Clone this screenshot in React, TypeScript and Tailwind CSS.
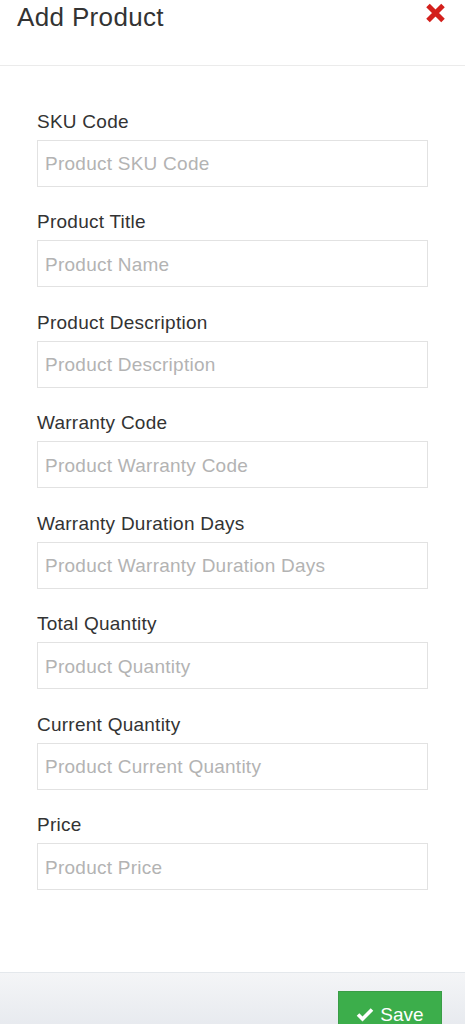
import React from "react";

const fields = [
  ["SKU Code", "Product SKU Code"],
  ["Product Title", "Product Name"],
  ["Product Description", "Product Description"],
  ["Warranty Code", "Product Warranty Code"],
  ["Warranty Duration Days", "Product Warranty Duration Days"],
  ["Total Quantity", "Product Quantity"],
  ["Current Quantity", "Product Current Quantity"],
  ["Price", "Product Price"],
];

export default function App() {
  return (
    <div className="w-[465px] h-[1024px] overflow-hidden bg-white flex flex-col" style={{ fontFamily: '"Liberation Sans", Arial, sans-serif' }}>
      <div className="h-[66px] border-b border-[#ebebeb] flex items-start justify-between pl-[17px] pr-[19px] shrink-0">
        <h1 className="text-[26px] leading-[30px] mt-[2px] tracking-[0.35px] text-[#333]">Add Product</h1>
        <svg width="21" height="20" viewBox="0 0 21 20" className="mt-[3px]">
          <path d="M3 2.5 L18 17.5 M18 2.5 L3 17.5" stroke="#d3201c" strokeWidth="5" strokeLinecap="butt" />
        </svg>
      </div>
      <div className="pt-[44.5px] pl-[37px] pr-[37px] pb-[82px] flex flex-col shrink-0">
        {fields.map(([label, ph], i) => (
          <div key={i} className={i < fields.length - 1 ? "mb-[24.5px]" : ""}>
            <label className="block text-[19px] leading-[22px] tracking-[0.25px] text-[#333] mb-[7px]">{label}</label>
            <input
              placeholder={ph}
              className="block w-full h-[47px] border border-[#e2e2e2] px-[7px] pt-[2px] text-[19px] tracking-[0.25px] text-[#333] placeholder:text-[#b3b3b3] outline-none"
              style={{ fontFamily: '"Liberation Sans", Arial, sans-serif' }}
            />
          </div>
        ))}
      </div>
      <div className="flex-1 border-t border-[#e4e8ec] bg-gradient-to-b from-[#f4f5f7] to-[#e6e9ee] flex justify-end items-start pt-[18px] pr-[23px]">
        <button className="w-[104px] h-[40px] bg-[#3cae4b] border border-[#3a9d47] text-white text-[19px] flex items-center justify-center gap-[6px] pb-[2px] mt-[0px]">
          <svg width="18" height="15" viewBox="0 0 18 15" className="mt-[8px]">
            <path d="M2 7.5 L6.5 12 L16 2.5" stroke="#fff" strokeWidth="3.6" fill="none" />
          </svg>
          <span className="mt-[10px]">Save</span>
        </button>
      </div>
    </div>
  );
}
